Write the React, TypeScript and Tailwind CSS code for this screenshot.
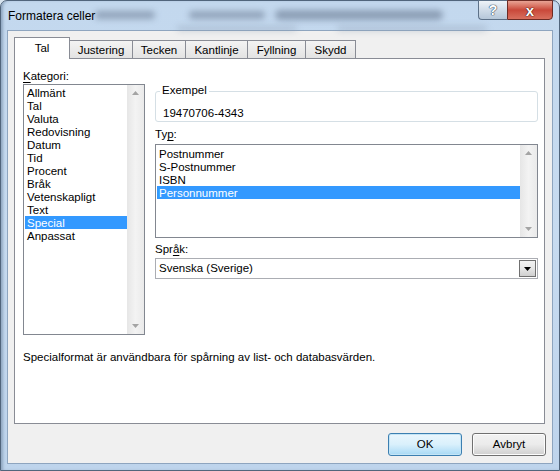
import React from 'react';

const tabs = [
  { label: 'Tal', w: 'w-[56px]' },
  { label: 'Justering', w: 'w-[64px]' },
  { label: 'Tecken', w: 'w-[54px]' },
  { label: 'Kantlinje', w: 'w-[63px]' },
  { label: 'Fyllning', w: 'w-[59px]' },
  { label: 'Skydd', w: 'w-[51px]' },
];

const kategorier = [
  'Allmänt',
  'Tal',
  'Valuta',
  'Redovisning',
  'Datum',
  'Tid',
  'Procent',
  'Bråk',
  'Vetenskapligt',
  'Text',
  'Special',
  'Anpassat',
];

const typer = ['Postnummer', 'S-Postnummer', 'ISBN', 'Personnummer'];

const Arrow = ({ down }: { down?: boolean }) => (
  <svg width="7" height="4" viewBox="0 0 7 4" className="block">
    {down ? (
      <path d="M0 0H7L3.5 4Z" fill="#a4a4a4" />
    ) : (
      <path d="M0 4H7L3.5 0Z" fill="#a4a4a4" />
    )}
  </svg>
);

// disabled scrollbar, Win7 look
const ScrollBar = () => (
  <div className="flex w-[17px] flex-col justify-between bg-gradient-to-r from-[#e6e6e6] via-[#f3f3f3] to-[#eaeaea] py-[6px]">
    <div className="flex justify-center">
      <Arrow />
    </div>
    <div className="flex justify-center">
      <Arrow down />
    </div>
  </div>
);

export default function App() {
  return (
    <div className="h-[471px] w-[560px] overflow-hidden bg-[#d8e4ef] font-['Liberation_Sans',Arial,sans-serif] text-[11.5px] leading-[13px] text-black">
      <div className="relative flex h-full w-full flex-col rounded-t-[7px] border border-[#51657c] bg-gradient-to-b from-[#c3d8ee] via-[#c7dbf0] to-[#bed4ec] px-[6px] pb-[6px] shadow-[inset_3px_0_3px_-1px_#8fa6c0]">
        {/* title bar */}
        <div className="relative flex h-[29px] items-center pl-[1px]">
          <div className="absolute left-[88px] top-[10px] h-[8px] w-[60px] rounded-full bg-[#5f7087]/50 blur-[3px]" />
          <div className="absolute left-[182px] top-[10px] h-[8px] w-[76px] rounded-full bg-[#5f7087]/50 blur-[3px]" />
          <div className="absolute left-[268px] top-[9px] h-[10px] w-[168px] rounded-full bg-[#5f7087]/55 blur-[3px]" />
          <div className="absolute left-[170px] top-[25px] h-[5px] w-[120px] rounded-full bg-[#8b9bb0]/40 blur-[3px]" />
          <div className="absolute left-[330px] top-[25px] h-[5px] w-[150px] rounded-full bg-[#8b9bb0]/40 blur-[3px]" />
          <span className="relative mt-[1px] text-[12px]">Formatera celler</span>
          <div className="absolute -top-px right-0 flex">
            <div className="flex h-[20px] w-[29px] items-center justify-center rounded-bl-[4px] border border-r-0 border-[#5d7188] bg-gradient-to-b from-[#eef3f8] via-[#d0dce8] to-[#b6c7d9]">
              <span className="text-[14px] font-bold leading-none text-white [text-shadow:0_0_1px_#33475e,0_0_1px_#33475e,0_0_1px_#33475e]">
                ?
              </span>
            </div>
            <div className="flex h-[20px] w-[46px] items-center justify-center rounded-br-[4px] border border-[#6d2b24] bg-gradient-to-b from-[#e8a394] via-[#c9483a] to-[#d86f5e]">
              <span className="text-[15px] font-bold leading-none text-white [text-shadow:0_0_1px_#4a1a14,0_0_1px_#4a1a14,0_0_1px_#4a1a14]">
                x
              </span>
            </div>
          </div>
        </div>

        {/* client area */}
        <div className="flex flex-1 flex-col border border-[#8ea5bf] bg-[#f0f0f0] pl-[6px] pt-[6px]">
          {/* tabs */}
          <div className="relative z-10 flex h-[21px] items-end">
            {tabs.map((t, i) =>
              i === 0 ? (
                <div
                  key={t.label}
                  className={`${t.w} -mb-px flex h-[22px] items-center justify-center border border-b-0 border-[#898c95] bg-white pb-[1px]`}
                >
                  {t.label}
                </div>
              ) : (
                <div
                  key={t.label}
                  className={`${t.w} -ml-px flex h-[18px] items-center justify-center border border-b-0 border-[#898c95] bg-gradient-to-b from-[#f3f3f3] to-[#e3e3e3] pt-[1px]`}
                >
                  {t.label}
                </div>
              )
            )}
          </div>

          {/* pane */}
          <div className="flex h-[366px] w-[531px] flex-col border border-[#898c95] bg-white pl-[8px] pt-[9px]">
            <div className="flex">
              {/* Kategori */}
              <div className="flex w-[122px] flex-col">
                <div className="h-[16px] pt-[1px] leading-[15px]">
                  <span className="underline decoration-1 underline-offset-2">K</span>ategori:
                </div>
                <div className="flex h-[251px] border border-[#828790] bg-white">
                  <div className="flex flex-1 flex-col pl-[1px] pt-[1px]">
                    {kategorier.map((k) => (
                      <div
                        key={k}
                        className={`h-[13px] pl-[2px] pt-[1px] leading-[12px] ${k === 'Special' ? 'bg-[#3399ff] text-white' : ''}`}
                      >
                        {k}
                      </div>
                    ))}
                  </div>
                  <ScrollBar />
                </div>
              </div>

              {/* right column */}
              <div className="ml-[10px] flex w-[383px] flex-col pt-[23px]">
                <div className="relative h-[31px] rounded-[3px] border border-[#d5dfe5]">
                  <span className="absolute -top-[9px] left-[4px] bg-white px-[2px] leading-[15px]">
                    Exempel
                  </span>
                  <div className="pl-[7px] pt-[15px]">19470706-4343</div>
                </div>

                <div className="mt-[4px] h-[18px] pt-[1px] leading-[15px]">
                  Ty<span className="underline decoration-1 underline-offset-2">p</span>:
                </div>
                <div className="flex h-[94px] border border-[#828790] bg-white">
                  <div className="flex flex-1 flex-col pl-[1px] pt-[2px]">
                    {typer.map((t) => (
                      <div
                        key={t}
                        className={`h-[13px] pl-[2px] pt-[1px] leading-[12px] ${t === 'Personnummer' ? 'bg-[#3399ff] text-white' : ''}`}
                      >
                        {t}
                      </div>
                    ))}
                  </div>
                  <ScrollBar />
                </div>

                <div className="mt-[3px] h-[17px] pt-[1px] leading-[15px]">
                  Spr<span className="underline decoration-1 underline-offset-2">å</span>k:
                </div>
                <div className="flex h-[21px] items-center border border-[#abadb3] bg-white">
                  <div className="flex-1 pl-[3px]">Svenska (Sverige)</div>
                  <div className="mr-[1px] flex h-[17px] w-[17px] items-center justify-center border border-[#707070] bg-gradient-to-b from-[#f2f2f2] via-[#e6e6e6] to-[#cfcfcf]">
                    <svg width="7" height="4" viewBox="0 0 7 4">
                      <path d="M0 0H7L3.5 4Z" fill="#000" />
                    </svg>
                  </div>
                </div>
              </div>
            </div>

            <div className="mt-[15px] leading-[15px]">
              Specialformat är användbara för spårning av list- och databasvärden.
            </div>
          </div>

          {/* buttons */}
          <div className="mt-[9px] flex w-[532px] justify-end gap-[10px]">
            <button className="h-[23px] w-[74px] rounded-[3px] border border-[#3c7fb1] bg-gradient-to-b from-[#eaf6fd] via-[#d9f0fc] to-[#a7d9f5] shadow-[inset_0_0_0_1px_#c4e5f6]">
              OK
            </button>
            <button className="h-[23px] w-[74px] rounded-[3px] border border-[#707070] bg-gradient-to-b from-[#f2f2f2] via-[#ebebeb] to-[#cfcfcf] shadow-[inset_0_0_0_1px_#fcfcfc]">
              Avbryt
            </button>
          </div>
        </div>
      </div>
    </div>
  );
}
